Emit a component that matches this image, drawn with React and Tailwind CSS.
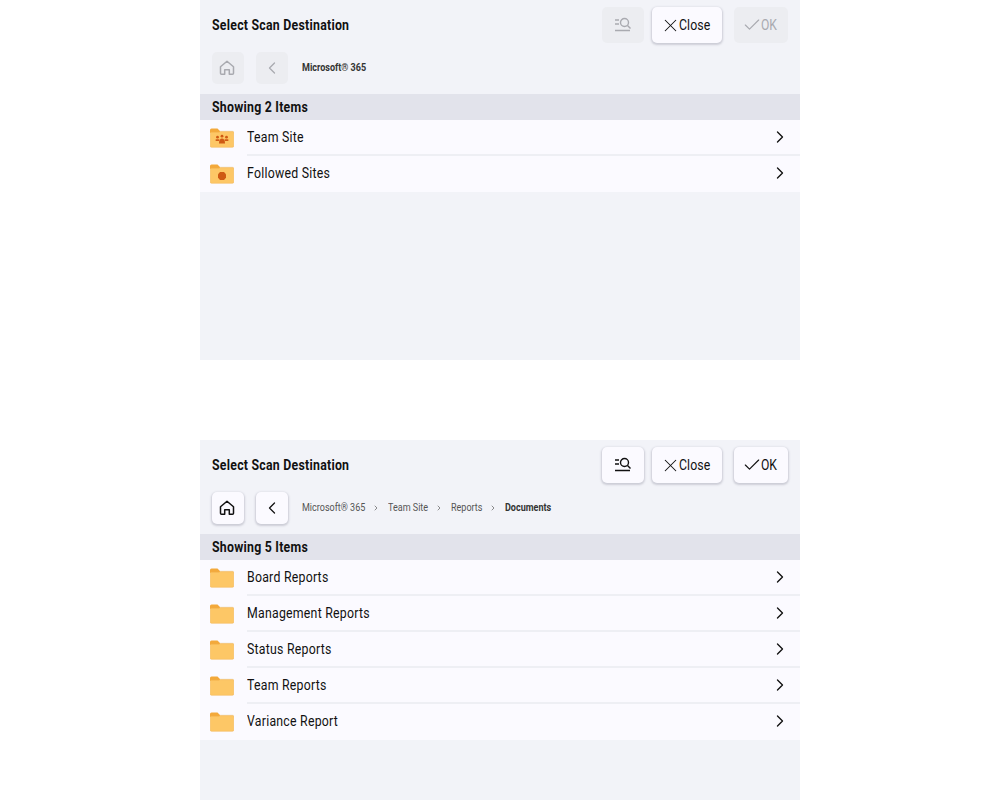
import { ChevronLeft, ChevronRight, Check, X } from "lucide-react";

const font = { fontFamily: '"Roboto", sans-serif' };

// Roboto Condensed is not installed, so Roboto gets squeezed horizontally
function Narrow({ className = "", children }) {
  return (
    <span className={`inline-block origin-left whitespace-nowrap ${className}`}>
      {children}
    </span>
  );
}

function ScanIcon({ className }) {
  return (
    <svg viewBox="0 0 18 16" width="18" height="16" fill="none" stroke="currentColor" strokeWidth="1.4" className={className}>
      <path d="M1 3h4M1 7h4M1 13.5h15" />
      <circle cx="10.5" cy="5.5" r="4" />
      <path d="M13.5 8.5l3 3" />
    </svg>
  );
}

function HomeIcon({ className }) {
  return (
    <svg viewBox="0 0 16 16" width="16" height="16" fill="none" stroke="currentColor" strokeWidth="1.5" strokeLinejoin="round" className={className}>
      <path d="M1.5 6.8L8 1.2l6.5 5.6v6.4a1 1 0 0 1-1 1h-3.2V9.7H5.7v4.5H2.5a1 1 0 0 1-1-1z" />
    </svg>
  );
}

function Folder({ badge }) {
  return (
    <svg viewBox="0 0 24 20" width="24" height="20" className="-mt-[1px] shrink-0">
      <path d="M0 2a1.5 1.5 0 0 1 1.5-1.5h6L10 3v2H0z" fill="#f3a93b" />
      <path d="M10 2.5h12.5A1.5 1.5 0 0 1 24 4v2H10z" fill="#f2eee6" />
      <path
        d="M.25 5.2a1 1 0 0 1 1-1h7.5l1.5-.6h12.5a1 1 0 0 1 1 1V18a1.3 1.3 0 0 1-1.3 1.3H1.55A1.3 1.3 0 0 1 .25 18z"
        fill="#fdc766"
        stroke="#f3b252"
        strokeWidth="0.5"
      />
      {badge === "team" && (
        <g fill="#cf5a14">
          <circle cx="7.5" cy="9.2" r="1.4" />
          <circle cx="12" cy="8.2" r="1.4" />
          <circle cx="16.5" cy="9.2" r="1.4" />
          <rect x="5.5" y="11.2" width="4" height="1.8" rx="0.8" />
          <rect x="14.5" y="11.2" width="4" height="1.8" rx="0.8" />
          <path d="M9 15.5c0-3.2 1.2-5 3-5s3 1.8 3 5z" />
        </g>
      )}
      {badge === "followed" && <path d="M10 8h4l2 2.2v3.6L14 16h-4l-2-2.2v-3.6z" fill="#cf5a14" />}
    </svg>
  );
}

function Btn({ enabled, className = "", children }) {
  return (
    <div
      className={`flex items-center rounded-[5px] ${
        enabled
          ? "bg-[#fbfaff] text-[#111] shadow-[0_1px_2px_1px_rgba(120,120,140,0.3)]"
          : "bg-[#ecedf1] text-[#a9aab0]"
      } ${className}`}
    >
      {children}
    </div>
  );
}

function Panel({ count, crumbs, items, enabled, rowsEnabled }) {
  return (
    <div className="h-[360px] w-[600px] bg-[#f2f3f8]">
      <div className="flex h-[50px] items-start px-[12px] pt-[7px]">
        <div className="flex h-[36px] flex-1 items-center">
          <Narrow className="scale-x-[0.88] text-[14px] font-bold tracking-[0.28px] text-[#111]">Select Scan Destination</Narrow>
        </div>
        <Btn enabled={enabled} className="h-[36px] w-[42px] justify-center">
          <ScanIcon />
        </Btn>
        <Btn enabled={enabled || rowsEnabled} className="ml-[8px] h-[36px] w-[70px] pl-[8px]">
          <X size={21} strokeWidth={1.2} className="shrink-0" />
          <Narrow className="-ml-[2px] w-[37px] scale-x-[0.82] text-[15px] tracking-[0.1px]">Close</Narrow>
        </Btn>
        <Btn enabled={enabled} className="ml-[12px] h-[36px] w-[54px] pl-[8px]">
          <Check size={20} strokeWidth={1.4} className="shrink-0" />
          <Narrow className="-ml-[1px] w-[20px] scale-x-[0.81] text-[15px]">OK</Narrow>
        </Btn>
      </div>

      <div className="flex h-[44px] items-start pl-[12px] pt-[2px]">
        <Btn enabled={enabled} className="h-[32px] w-[32px] justify-center">
          <HomeIcon className="mr-[2px]" />
        </Btn>
        <Btn enabled={enabled} className="ml-[12px] h-[32px] w-[32px] justify-center">
          <ChevronLeft size={20} strokeWidth={1.5} />
        </Btn>
        <div className="ml-[14px] flex h-[32px] items-center text-[11px] text-[#555]">
          {crumbs.map((c, i) => (
            <div key={c.label} className="flex items-center">
              {i > 0 && <ChevronRight size={8} strokeWidth={2} className="ml-[6px] mr-[8px] text-[#555]" />}
              <Narrow className={`scale-x-[0.82] ${c.width} ${i === crumbs.length - 1 ? "font-bold text-[#333]" : ""}`}>
                {c.label}
              </Narrow>
            </div>
          ))}
        </div>
      </div>

      <div className="flex h-[26px] items-center bg-[#e2e3eb] pl-[12px]">
        <Narrow className="scale-x-[0.88] text-[14px] font-bold tracking-[0.28px] text-[#111]">Showing {count} Items</Narrow>
      </div>

      <div className="bg-[#fbfaff]">
        {items.map((item, i) => (
          <div key={item.name} className="flex h-[36px] items-center pl-[10px]">
            <Folder badge={item.badge} />
            <div
              className={`ml-[13px] flex h-full flex-1 items-center border-y-2 border-t-transparent pr-[10px] ${
                i < items.length - 1 ? "border-b-[#eeeff4]" : "border-b-transparent"
              }`}
            >
              <Narrow className="mb-[2px] flex-1 scale-x-[0.82] text-[15px] tracking-[0.3px] text-[#111]">{item.name}</Narrow>
              <ChevronRight size={20} strokeWidth={1.6} className="mb-[2px] text-[#111]" />
            </div>
          </div>
        ))}
      </div>
    </div>
  );
}

export default function App() {
  return (
    <div className="flex h-[800px] flex-col items-center gap-[80px] overflow-hidden bg-white" style={font}>
      <Panel
        count={2}
        crumbs={[{ label: "Microsoft® 365", width: "w-[64px]" }]}
        rowsEnabled
        items={[
          { name: "Team Site", badge: "team" },
          { name: "Followed Sites", badge: "followed" },
        ]}
      />
      <Panel
        count={5}
        enabled
        crumbs={[
          { label: "Microsoft® 365", width: "w-[64px]" },
          { label: "Team Site", width: "w-[41px]" },
          { label: "Reports", width: "w-[32px]" },
          { label: "Documents", width: "w-[45px]" },
        ]}
        items={[
          { name: "Board Reports" },
          { name: "Management Reports" },
          { name: "Status Reports" },
          { name: "Team Reports" },
          { name: "Variance Report" },
        ]}
      />
    </div>
  );
}
